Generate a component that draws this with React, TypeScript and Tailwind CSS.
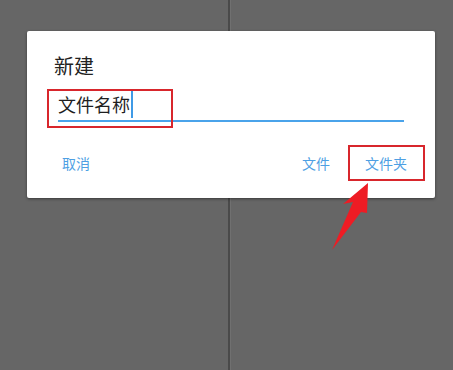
import React from "react";

export default function App() {
  return (
    <div
      className="relative w-[453px] h-[370px] overflow-hidden bg-[#656565] flex"
      style={{ fontFamily: '"Noto Sans CJK SC", "Noto Sans", sans-serif' }}
    >
      <div className="w-[228px] h-full bg-[#666666]" />
      <div className="w-[2px] h-full bg-[#4a4a4a]" />
      <div className="w-[1px] h-full bg-[#707070]" />
      <div className="flex-1 h-full bg-[#666666]" />

      {/* dialog */}
      <div className="absolute left-[27px] top-[31px] w-[408px] h-[167px] bg-white rounded-[2px] shadow-[0_1px_3px_rgba(0,0,0,0.45)] flex flex-col">
        <div className="pl-[27px] pt-[23px] text-[20px] leading-[24px] text-[#222222]">新建</div>
        <div className="mx-[31px] mt-[14px] border-b-2 border-[#4aa3ea] pb-[4px] flex items-center h-[30px]">
          <span className="text-[18px] leading-[24px] text-[#1f1f1f]">文件名称</span>
          <span className="ml-[1px] w-[2px] h-[28px] bg-[#3f9ae6]" />
        </div>
        <div className="mt-[31px] flex justify-between pl-[35px] pr-[28px] text-[14px] leading-[20px] text-[#4e9fe3]">
          <span>取消</span>
          <div className="flex gap-[35px]">
            <span>文件</span>
            <span>文件夹</span>
          </div>
        </div>
      </div>

      {/* annotations */}
      <div className="absolute left-[47px] top-[89px] w-[126px] h-[39px] border-2 border-[#d8262c]" />
      <div className="absolute left-[348px] top-[145px] w-[77px] h-[36px] border-2 border-[#d8262c]" />
      <svg className="absolute left-0 top-0" width="453" height="370" viewBox="0 0 453 370">
        <polygon
          points="368,183 343,204 353,202 332,250 361,212 367,213"
          fill="#ee1c24"
        />
      </svg>
    </div>
  );
}
